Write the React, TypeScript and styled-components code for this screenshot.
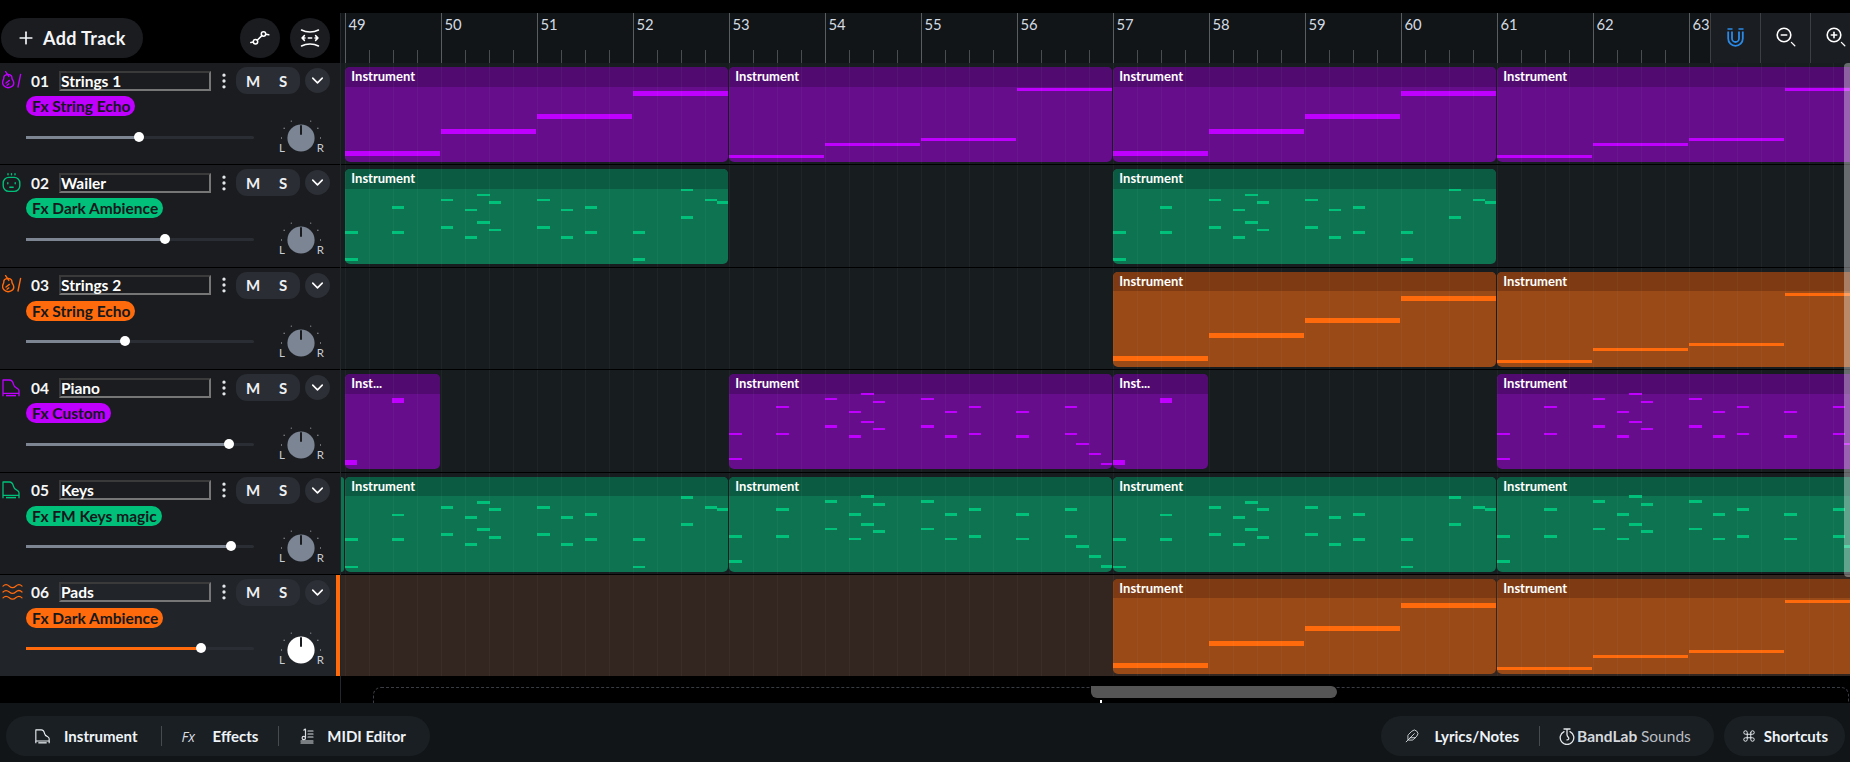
import React from "react";
import styled, { createGlobalStyle } from "styled-components";
import { ChevronDown, Command, EllipsisVertical, Feather, Plus } from "lucide-react";

type Tone = "purple" | "green" | "orange";

const tones = {
  purple: { note: "#bf00ff", body: "#650d8b", head: "#510b70" },
  green: { note: "#00c07a", body: "#0d7350", head: "#0b5b42" },
  orange: { note: "#ff6a0d", body: "#994a17", head: "#7d3a13" },
};

const BAR = 96;
const ROW = 102.4;

// x, y centre inside a clip
const keysA = [
  [0, 63], [0, 90.3], [46.7, 38.3], [46.7, 63], [95.7, 30.7], [95.7, 58], [119.3, 40.7], [119.3, 68],
  [132, 25.7], [132, 53], [143.3, 33], [143.3, 60.7], [192, 30.7], [192, 58], [215.7, 40.7], [215.7, 68],
  [239.7, 38], [239.7, 63], [287.3, 63], [287.3, 90.3], [335.7, 20.7], [335.7, 48], [359.7, 30.7], [372, 33],
];
const keysB = [
  [0, 60], [0, 85], [47, 32.7], [47, 60], [95.7, 25], [95.7, 52.3], [119.7, 37.7], [119.7, 62.3],
  [132, 20], [132, 47.7], [143.3, 27.7], [143.3, 55], [192, 25], [192, 52.3], [215.7, 37.7], [215.7, 62.3],
  [239.3, 32.7], [239.3, 60], [287, 37.7], [287, 62.3], [335.7, 32.7], [335.7, 60], [347, 70], [359.7, 80], [372, 90],
];

type NoteBox = { x: number; y: number; w: number; h: number };

const short = (list: number[][]): NoteBox[] =>
  list.map(([x, y]) => ({ x, y: y - 1.25, w: 12.4, h: 2.5 }));

const patterns: Record<string, NoteBox[]> = {
  stepThick: [
    { x: 0, y: 84, w: 95, h: 5 },
    { x: 96, y: 61.7, w: 95, h: 5 },
    { x: 192, y: 46.7, w: 95, h: 5 },
    { x: 288, y: 24.3, w: 95, h: 5 },
  ],
  stepThin: [
    { x: 0, y: 88, w: 95, h: 3 },
    { x: 96, y: 76, w: 95, h: 3 },
    { x: 192, y: 71, w: 95, h: 3 },
    { x: 288, y: 21, w: 95, h: 3 },
  ],
  keysA: short(keysA),
  keysB: short(keysB),
  stub: [
    { x: 46.7, y: 24, w: 11.6, h: 5 },
    { x: 0, y: 86.2, w: 12, h: 5 },
  ],
};

type ClipDef = { bar: number; bars: number; pattern: string; label?: string };

type TrackDef = {
  num: string;
  name: string;
  fx: string;
  tone: Tone;
  icon: "violin" | "robot" | "piano" | "waves";
  volume: number;
  selected?: boolean;
  tail?: boolean;
  clips: ClipDef[];
};

const tracks: TrackDef[] = [
  {
    num: "01", name: "Strings 1", fx: "String Echo", tone: "purple", icon: "violin", volume: 0.496,
    clips: [
      { bar: 49, bars: 4, pattern: "stepThick" },
      { bar: 53, bars: 4, pattern: "stepThin" },
      { bar: 57, bars: 4, pattern: "stepThick" },
      { bar: 61, bars: 4, pattern: "stepThin" },
    ],
  },
  {
    num: "02", name: "Wailer", fx: "Dark Ambience", tone: "green", icon: "robot", volume: 0.61,
    clips: [
      { bar: 49, bars: 4, pattern: "keysA" },
      { bar: 57, bars: 4, pattern: "keysA" },
    ],
  },
  {
    num: "03", name: "Strings 2", fx: "String Echo", tone: "orange", icon: "violin", volume: 0.434,
    clips: [
      { bar: 57, bars: 4, pattern: "stepThick" },
      { bar: 61, bars: 4, pattern: "stepThin" },
    ],
  },
  {
    num: "04", name: "Piano", fx: "Custom", tone: "purple", icon: "piano", volume: 0.89,
    clips: [
      { bar: 49, bars: 1, pattern: "stub", label: "Inst..." },
      { bar: 53, bars: 4, pattern: "keysB" },
      { bar: 57, bars: 1, pattern: "stub", label: "Inst..." },
      { bar: 61, bars: 4, pattern: "keysB" },
    ],
  },
  {
    num: "05", name: "Keys", fx: "FM Keys magic", tone: "green", icon: "piano", volume: 0.9, tail: true,
    clips: [
      { bar: 49, bars: 4, pattern: "keysA" },
      { bar: 53, bars: 4, pattern: "keysB" },
      { bar: 57, bars: 4, pattern: "keysA" },
      { bar: 61, bars: 4, pattern: "keysB" },
    ],
  },
  {
    num: "06", name: "Pads", fx: "Dark Ambience", tone: "orange", icon: "waves", volume: 0.767, selected: true,
    clips: [
      { bar: 57, bars: 4, pattern: "stepThick" },
      { bar: 61, bars: 4, pattern: "stepThin" },
    ],
  },
];

const rulerBars = Array.from({ length: 15 }, (_, i) => 49 + i);

const GlobalStyle = createGlobalStyle`
  html, body {
    margin: 0;
    height: 100%;
    background: #000;
    overflow: hidden;
  }
  * {
    box-sizing: border-box;
  }
`;

const Page = styled.div`
  width: 1850px;
  height: 762px;
  display: flex;
  flex-direction: column;
  padding-top: 13px;
  background: #000;
  color: #fff;
  font-family: Lato, "Open Sans", sans-serif;
`;

const Workspace = styled.div`
  display: grid;
  grid-template-columns: 340px 1fr;
  height: 690px;
  flex-shrink: 0;
  overflow: hidden;
`;

const LeftColumn = styled.div`
  display: flex;
  flex-direction: column;
`;

const TopBar = styled.div`
  height: 50px;
  flex-shrink: 0;
  display: flex;
  align-items: center;
  padding: 0 6px 0 1px;
`;

const AddTrack = styled.button`
  width: 142px;
  height: 40px;
  border: 0;
  border-radius: 20px;
  background: #1a1c20;
  color: #f4f6f8;
  display: flex;
  align-items: center;
  gap: 7px;
  padding: 0 0 0 15px;
  font: 700 18px Lato, sans-serif;
  letter-spacing: 0.35px;
`;

const RoundGroup = styled.div`
  display: flex;
  gap: 10px;
  margin-left: 97px;
`;

const RoundButton = styled.button`
  width: 40px;
  height: 40px;
  border: 0;
  border-radius: 50%;
  background: #1a1c20;
  color: #fff;
  display: flex;
  align-items: center;
  justify-content: center;
  padding: 0;
`;

const TrackRow = styled.div<{ $selected?: boolean }>`
  height: ${ROW}px;
  flex-shrink: 0;
  position: relative;
  padding-top: 4px;
  background: ${(p) => (p.$selected ? "#212429" : "#1a1c20")};
  border-bottom: 1px solid #000;
`;

const SelectedEdge = styled.div`
  position: absolute;
  top: 0;
  right: 0;
  bottom: 0;
  width: 4px;
  background: #ff6a0d;
`;

const TitleLine = styled.div`
  display: flex;
  align-items: center;
  height: 27px;
`;

const IconSlot = styled.div<{ $tone: Tone }>`
  width: 31px;
  padding-left: 2px;
  color: ${(p) => tones[p.$tone].note};
  display: flex;
  align-items: center;
`;

const TrackNumber = styled.span`
  width: 28px;
  font-size: 15.5px;
  font-weight: 700;
  color: #f4f6f8;
`;

const TrackName = styled.div`
  width: 152px;
  height: 20px;
  border: 2px solid;
  border-color: #3a3a3a #767676 #767676 #3a3a3a;
  padding-left: 0;
  font-size: 15.5px;
  line-height: 16px;
  font-weight: 700;
  color: #fff;
`;

const MoreSlot = styled.div`
  width: 25px;
  display: flex;
  justify-content: center;
  color: #e4e7ea;
`;

const MuteSolo = styled.div`
  width: 64px;
  height: 27px;
  border-radius: 11px;
  background: #2a2d33;
  display: grid;
  grid-template-columns: 1fr 1fr;
  align-items: center;
  justify-items: center;
  padding: 0 2px;
  font-size: 15px;
  font-weight: 700;
  color: #eef0f2;
`;

const Expand = styled.div`
  width: 25px;
  height: 25px;
  margin-left: 5px;
  border-radius: 50%;
  background: #2c2f35;
  color: #fff;
  display: flex;
  align-items: center;
  justify-content: center;
`;

const FxPill = styled.div<{ $tone: Tone }>`
  display: inline-flex;
  align-items: center;
  height: 20px;
  margin: 2px 0 0 26px;
  padding: 0 5px 0 6px;
  border-radius: 10px;
  background: ${(p) => tones[p.$tone].note};
  color: #16181c;
  font-size: 15.5px;
  font-weight: 700;
  white-space: nowrap;
`;

const MixerLine = styled.div`
  display: flex;
  align-items: center;
  margin: 3px 0 0 26px;
`;

const Slider = styled.div`
  position: relative;
  width: 228px;
  height: 3px;
  border-radius: 2px;
  background: #2a2d33;
`;

const SliderFill = styled.div<{ $selected?: boolean }>`
  height: 100%;
  background: ${(p) => (p.$selected ? "#ff6a0d" : "#7c8591")};
`;

const SliderThumb = styled.div`
  position: absolute;
  top: -4px;
  width: 10px;
  height: 10px;
  margin-left: -5px;
  border-radius: 50%;
  background: #fff;
`;

const KnobWrap = styled.div`
  position: relative;
  width: 46px;
  height: 36px;
  margin-left: 24px;
`;

const KnobLetter = styled.span<{ $side: "left" | "right" }>`
  position: absolute;
  bottom: 1px;
  ${(p) => (p.$side === "left" ? "left: 1px;" : "right: 0;")}
  font-size: 11.5px;
  line-height: 12px;
  color: #c8cdd3;
`;

const RightColumn = styled.div`
  position: relative;
  display: flex;
  flex-direction: column;
  min-width: 0;
  border-left: 1px solid #24272a;
`;

const Ruler = styled.div`
  height: 50px;
  flex-shrink: 0;
  display: flex;
  background: #111518;
`;

const RulerStrip = styled.div`
  flex: 1;
  min-width: 0;
  display: flex;
  padding-left: 4px;
  overflow: hidden;
`;

const RulerBar = styled.div`
  width: ${BAR}px;
  flex-shrink: 0;
  display: flex;
  flex-direction: column;
  border-left: 1px solid #5a5d60;
`;

const BarNumber = styled.span`
  padding: 2px 0 0 2.5px;
  font-size: 14.8px;
  line-height: 19px;
  color: #d4dbe2;
`;

const Ticks = styled.div`
  display: flex;
  margin-top: auto;
  padding-left: 23px;
`;

const Tick = styled.div`
  width: 24px;
  height: 13px;
  border-left: 1.5px solid #4a4d50;
`;

const RulerTools = styled.div`
  width: 140px;
  flex-shrink: 0;
  display: flex;
  overflow: hidden;
`;

const ToolCell = styled.div`
  width: 50px;
  flex-shrink: 0;
  display: flex;
  align-items: center;
  justify-content: center;
  padding-bottom: 2px;
  background: #1a1d21;
  border-left: 1px solid #3c3f43;
`;

const Lane = styled.div<{ $selected?: boolean }>`
  position: relative;
  height: ${ROW}px;
  flex-shrink: 0;
  overflow: hidden;
  background: ${(p) => (p.$selected ? "#33251f" : "#171c1f")};
  border-bottom: 1px solid #000;
  &::after {
    content: "";
    position: absolute;
    inset: 0;
    pointer-events: none;
    background: repeating-linear-gradient(
      to right,
      transparent 0 4px,
      rgba(255, 255, 255, 0.035) 4px 5px,
      transparent 5px 24px
    );
  }
`;

const Clip = styled.div<{ $tone: Tone }>`
  position: absolute;
  top: 4px;
  height: 95px;
  border-radius: 5px;
  overflow: hidden;
  background: ${(p) => tones[p.$tone].body};
`;

const ClipHead = styled.div<{ $tone: Tone }>`
  height: 19.5px;
  padding-left: 6px;
  background: ${(p) => tones[p.$tone].head};
  font-size: 13px;
  line-height: 18px;
  font-weight: 700;
  color: #fff;
`;

const Note = styled.div<{ $tone: Tone }>`
  position: absolute;
  background: ${(p) => tones[p.$tone].note};
`;

const ClipTail = styled.div`
  position: absolute;
  left: 0;
  top: 4px;
  width: 3px;
  height: 95px;
  border-radius: 0 4px 4px 0;
  background: #0d7350;
`;

const OverviewArea = styled.div`
  position: relative;
  flex: 1;
  background: #000;
  overflow: hidden;
`;

const DropZone = styled.div`
  position: absolute;
  left: 32px;
  right: 1px;
  top: 10px;
  height: 40px;
  border: 1.5px dashed #3a3d44;
  border-radius: 8px;
`;

const HScrollThumb = styled.div`
  position: absolute;
  left: 750px;
  top: 9px;
  width: 246px;
  height: 12px;
  border-radius: 0 6px 6px 6px;
  background: #555;
`;

const Playhead = styled.div`
  position: absolute;
  left: 759px;
  top: 23px;
  width: 2px;
  height: 3px;
  background: #fff;
`;

const VScrollThumb = styled.div`
  position: absolute;
  top: 50px;
  right: 0;
  width: 6px;
  height: 514px;
  border-radius: 4px 0 0 4px;
  background: rgba(255, 255, 255, 0.35);
`;

const BottomBar = styled.div`
  flex: 1;
  display: flex;
  align-items: flex-start;
  padding: 13px 5px 0 6px;
  background: #111518;
`;

const Pill = styled.div<{ $pad: string }>`
  height: 40px;
  display: flex;
  align-items: center;
  padding: ${(p) => p.$pad};
  border-radius: 20px;
  background: #1a1f23;
  font-size: 15px;
  font-weight: 700;
  color: #eef3f8;
  white-space: nowrap;
`;

const PillGroup = styled.div`
  margin-left: auto;
  display: flex;
  gap: 10px;
`;

const PillItem = styled.div<{ $gap: number }>`
  display: flex;
  align-items: center;
  gap: ${(p) => p.$gap}px;
`;

const PillDivider = styled.div<{ $before: number; $after: number }>`
  width: 1px;
  height: 20px;
  margin: 0 ${(p) => p.$after}px 0 ${(p) => p.$before}px;
  background: #464b50;
`;

const FxMark = styled.span`
  width: 14px;
  font-size: 14px;
  font-style: italic;
  font-weight: 400;
  font-family: "Open Sans", sans-serif;
  color: #d8dde2;
`;

const Brand = styled.span`
  font-size: 15.5px;
  font-weight: 700;
  color: #d5d9dd;
`;

const BrandLight = styled.span`
  font-weight: 400;
  color: #b9bdc2;
`;

const PianoIcon = ({ size = 18 }: { size?: number }) => (
  <svg width={size} height={size} viewBox="0 0 18 18" fill="none" stroke="currentColor" strokeWidth="1.3">
    <path d="M1 1h6.4c2.6 0 3.6 2 4 4.2.4 2.4 1.7 3.1 3.4 3.9 1.1.5 2.2 1.2 2.2 2.6v2.6H1z" strokeLinejoin="round" />
    <path d="M1 14.5V17.2M17 14.5V17.2" />
    <path d="M4 16.6h10" strokeWidth="1.5" />
  </svg>
);

const ViolinIcon = () => (
  <svg width="20" height="20" viewBox="0 0 20 20" fill="none" stroke="currentColor" strokeWidth="1.4" strokeLinecap="round" strokeLinejoin="round">
    <path d="M3.6 0.6 6.8 5.4" />
    <path d="M4.8 3.6c-2 .4-3.1 1.7-3 3.2.1 1.1-.4 1.7-.8 2.6-.7 1.8-.4 4 .9 5.4 1.5 1.6 4.4 2.2 6.6 1.4 2.5-.9 3.7-3.2 3-5.6-.3-1.1-1.1-1.8-1.4-2.9-.3-1-.1-2-.7-2.9-.7-1-2.9-1.5-4.6-1.2z" />
    <path d="M4 12 7.4 9.4M5 14.2l1.8-1.3" />
    <path d="M18.6 3.4 16 16" />
  </svg>
);

const RobotIcon = () => (
  <svg width="19" height="20" viewBox="0 0 19 20" fill="none" stroke="currentColor" strokeWidth="1.4" strokeLinecap="round">
    <path d="M6 0.8v1M9.5 0.8v1M13 0.8v1" />
    <rect x="1.2" y="4.4" width="16.6" height="14" rx="5.6" />
    <path d="M5.8 9.6v1.2M13.2 9.6v1.2M7.8 14.2h3.4" />
  </svg>
);

const WavesIcon = () => (
  <svg width="21" height="18" viewBox="0 0 21 18" fill="none" stroke="currentColor" strokeWidth="1.2" strokeLinecap="round">
    <path d="M1 3.2c2-2 4-2 6.3 0 2.4 2 4.2 2 6.4 0 2.2-2 4.3-2 6.3 0" />
    <path d="M1 9c2-2 4-2 6.3 0 2.4 2 4.2 2 6.4 0 2.2-2 4.3-2 6.3 0" />
    <path d="M1 14.8c2-2 4-2 6.3 0 2.4 2 4.2 2 6.4 0 2.2-2 4.3-2 6.3 0" />
  </svg>
);

const trackIcons = {
  violin: <ViolinIcon />,
  robot: <RobotIcon />,
  piano: <PianoIcon />,
  waves: <WavesIcon />,
};

const AutomationIcon = () => (
  <svg width="20" height="20" viewBox="0 0 20 20" fill="none" stroke="#fff" strokeWidth="1.5" strokeLinecap="round">
    <circle cx="5.5" cy="13.8" r="2.2" />
    <circle cx="13.5" cy="6" r="2.2" />
    <path d="M7.2 12.2 11.9 7.6M0.8 14.6 3.3 14M15.7 6.2 18.8 6.8" />
  </svg>
);

const TightenIcon = () => (
  <svg width="20" height="20" viewBox="0 0 20 20" fill="none" stroke="#fff" strokeWidth="1.5" strokeLinecap="round" strokeLinejoin="round">
    <path d="M1.5 2c5 2.6 12 2.6 17 0M1.5 18c5-2.6 12-2.6 17 0" />
    <path d="M2 10h3M2 10l2.4-2.4M2 10l2.4 2.4M18 10h-3M18 10l-2.4-2.4M18 10l-2.4 2.4M8.3 10h3.4" />
  </svg>
);

const MagnetIcon = () => (
  <svg width="17" height="19" viewBox="0 0 17 19" fill="none" stroke="#2a8ae8">
    <path d="M0.5 1h5M11.5 1h5" strokeWidth="1.6" />
    <path d="M1.2 3.6v6.8c0 4 3.2 7.4 7.3 7.4s7.3-3.4 7.3-7.4V3.6" strokeWidth="1.8" />
    <path d="M5 3.6v6.8c0 2 1.6 3.6 3.5 3.6s3.5-1.6 3.5-3.6V3.6" strokeWidth="1.8" />
  </svg>
);

const LensIcon = ({ plus }: { plus?: boolean }) => (
  <svg width="20" height="20" viewBox="0 0 20 20" fill="none" stroke="#fff" strokeWidth="1.6" strokeLinecap="round">
    <circle cx="8" cy="8" r="6.8" />
    <path d="M5.3 8h5.4" />
    {plus && <path d="M8 5.3v5.4" />}
    <path d="M15.4 15.4l3.4 3.4" strokeWidth="1.3" />
  </svg>
);

const MidiIcon = () => (
  <svg width="14" height="16" viewBox="0 0 14 16" fill="none" stroke="#d8dde2" strokeWidth="1.2" strokeLinecap="round">
    <path d="M5.5 1.2v8.6M5.5 1.2c-.7 0-1.6.3-1.6 1" />
    <circle cx="3.8" cy="10" r="1.7" />
    <path d="M8 3h5M8 6h5M8 9h5M1 13h12M1 15h12" />
  </svg>
);

const BandLabIcon = () => (
  <svg width="16" height="17" viewBox="0 0 16 17" fill="none" stroke="#e4e7ea" strokeWidth="1.3" strokeLinecap="round" strokeLinejoin="round">
    <path d="M5 3.6A6.8 6.8 0 1 0 11 3.6" />
    <path d="M5 1h6M8 1v5.8c0 1 .5 1.8 1.4 2.7.8.8.4 2.4-1.4 2.4" />
  </svg>
);

const Knob = ({ selected }: { selected?: boolean }) => (
  <svg width="46" height="36" viewBox="0 0 46 36" fill="none">
    <g stroke="#b8bdc3" strokeWidth="1">
      {[-90, -60, -30, 0, 30, 60, 90].map((deg) => (
        <line key={deg} x1="23" y1="-1" x2="23" y2="0" transform={`rotate(${deg} 23 19)`} />
      ))}
    </g>
    <circle cx="23" cy="19" r="13.6" fill={selected ? "#fff" : "#7c8593"} />
    <rect x="22" y="6" width="2" height="10" rx="1" fill="#1a1c20" />
  </svg>
);

const TrackHeader = ({ track }: { track: TrackDef }) => (
  <TrackRow $selected={track.selected}>
    <TitleLine>
      <IconSlot $tone={track.tone}>{trackIcons[track.icon]}</IconSlot>
      <TrackNumber>{track.num}</TrackNumber>
      <TrackName>{track.name}</TrackName>
      <MoreSlot>
        <EllipsisVertical size={20} strokeWidth={2} />
      </MoreSlot>
      <MuteSolo>
        <span>M</span>
        <span>S</span>
      </MuteSolo>
      <Expand>
        <ChevronDown size={19} strokeWidth={2} />
      </Expand>
    </TitleLine>
    <FxPill $tone={track.tone}>Fx {track.fx}</FxPill>
    <MixerLine>
      <Slider>
        <SliderFill $selected={track.selected} style={{ width: `${track.volume * 100}%` }} />
        <SliderThumb style={{ left: `${track.volume * 100}%` }} />
      </Slider>
      <KnobWrap>
        <Knob selected={track.selected} />
        <KnobLetter $side="left">L</KnobLetter>
        <KnobLetter $side="right">R</KnobLetter>
      </KnobWrap>
    </MixerLine>
    {track.selected && <SelectedEdge />}
  </TrackRow>
);

const TrackLane = ({ track }: { track: TrackDef }) => (
  <Lane $selected={track.selected}>
    {track.tail && <ClipTail />}
    {track.clips.map((clip) => (
      <Clip
        key={clip.bar}
        $tone={track.tone}
        style={{ left: (clip.bar - 49) * BAR + 4.3, width: clip.bars * BAR - 1 }}
      >
        <ClipHead $tone={track.tone}>{clip.label ?? "Instrument"}</ClipHead>
        {patterns[clip.pattern].map((n, i) => (
          <Note
            key={i}
            $tone={track.tone}
            style={{ left: n.x, top: n.y, width: n.w, height: n.h }}
          />
        ))}
      </Clip>
    ))}
  </Lane>
);

export default function App() {
  return (
    <Page>
      <GlobalStyle />
      <Workspace>
        <LeftColumn>
          <TopBar>
            <AddTrack>
              <Plus size={20} strokeWidth={2} />
              Add Track
            </AddTrack>
            <RoundGroup>
              <RoundButton>
                <AutomationIcon />
              </RoundButton>
              <RoundButton>
                <TightenIcon />
              </RoundButton>
            </RoundGroup>
          </TopBar>
          {tracks.map((t) => (
            <TrackHeader key={t.num} track={t} />
          ))}
        </LeftColumn>
        <RightColumn>
          <Ruler>
            <RulerStrip>
              {rulerBars.map((bar) => (
                <RulerBar key={bar}>
                  <BarNumber>{bar}</BarNumber>
                  <Ticks>
                    <Tick />
                    <Tick />
                    <Tick />
                  </Ticks>
                </RulerBar>
              ))}
            </RulerStrip>
            <RulerTools>
              <ToolCell>
                <MagnetIcon />
              </ToolCell>
              <ToolCell>
                <LensIcon />
              </ToolCell>
              <ToolCell>
                <LensIcon plus />
              </ToolCell>
            </RulerTools>
          </Ruler>
          {tracks.map((t) => (
            <TrackLane key={t.num} track={t} />
          ))}
          <OverviewArea>
            <DropZone />
            <HScrollThumb />
            <Playhead />
          </OverviewArea>
          <VScrollThumb />
        </RightColumn>
      </Workspace>
      <BottomBar>
        <Pill $pad="0 24px 0 29px">
          <PillItem $gap={14}>
            <PianoIcon size={15} />
            Instrument
          </PillItem>
          <PillDivider $before={23} $after={20} />
          <PillItem $gap={17}>
            <FxMark>Fx</FxMark>
            Effects
          </PillItem>
          <PillDivider $before={20} $after={21} />
          <PillItem $gap={13}>
            <MidiIcon />
            MIDI Editor
          </PillItem>
        </Pill>
        <PillGroup>
          <Pill $pad="0 23px 0 24px">
            <PillItem $gap={16}>
              <Feather size={14} strokeWidth={1.4} />
              Lyrics/Notes
            </PillItem>
            <PillDivider $before={20} $after={19} />
            <PillItem $gap={2}>
              <BandLabIcon />
              <Brand>
                BandLab <BrandLight>Sounds</BrandLight>
              </Brand>
            </PillItem>
          </Pill>
          <Pill $pad="0 17px 0 18px">
            <PillItem $gap={8}>
              <Command size={14} strokeWidth={1.6} />
              Shortcuts
            </PillItem>
          </Pill>
        </PillGroup>
      </BottomBar>
    </Page>
  );
}
